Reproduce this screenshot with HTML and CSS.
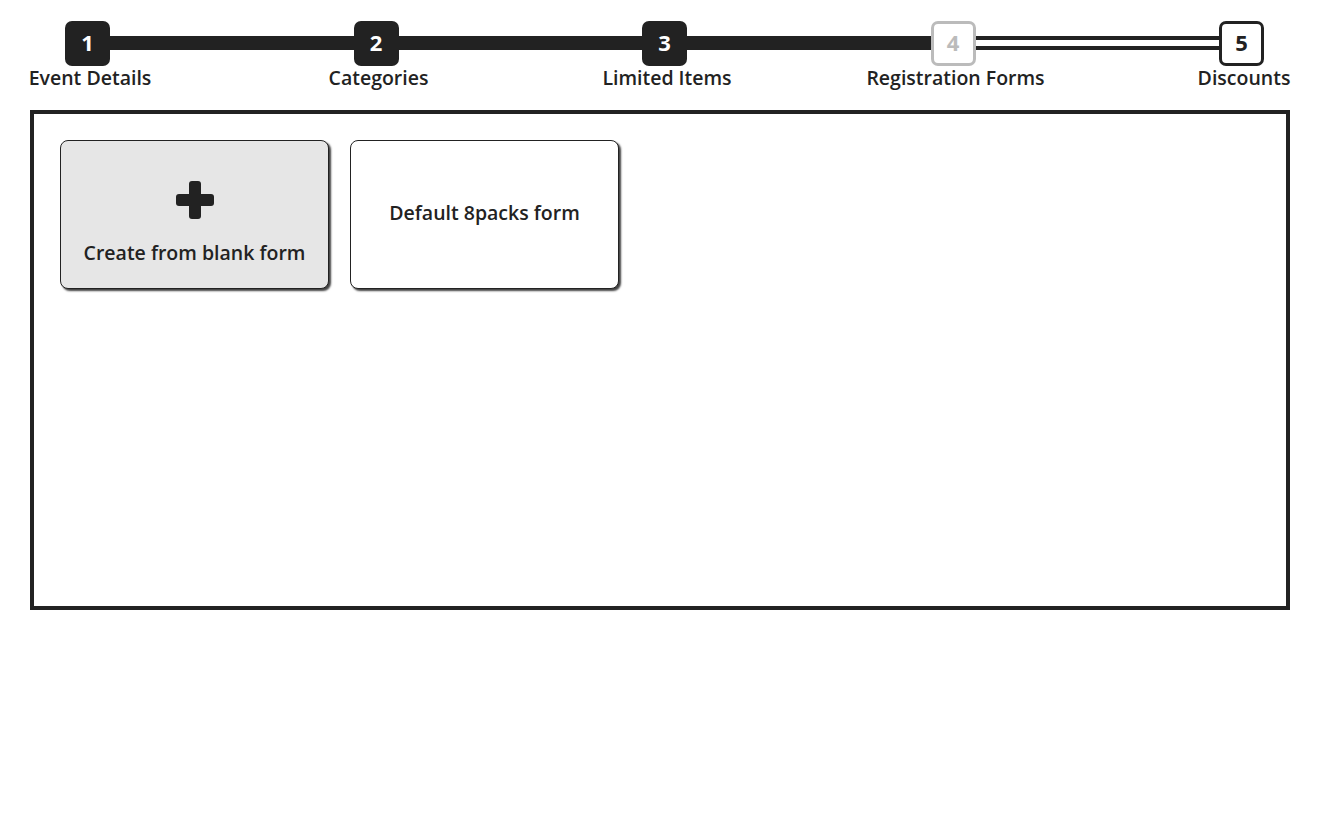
FILE: index.html
```html
<!DOCTYPE html>
<html lang="en">
<head>
  <meta charset="UTF-8" />
  <title>Registration Forms</title>
  <link rel="stylesheet" href="styles.css">
</head>
<body>
  <div class="steps">
    <div class="step done">
      <div class="step-num">1</div>
      <div class="step-label">Event Details</div>
    </div>
    <div class="bar"></div>
    <div class="step done">
      <div class="step-num">2</div>
      <div class="step-label">Categories</div>
    </div>
    <div class="bar"></div>
    <div class="step done">
      <div class="step-num">3</div>
      <div class="step-label">Limited Items</div>
    </div>
    <div class="bar"></div>
    <div class="step current">
      <div class="step-num">4</div>
      <div class="step-label">Registration Forms</div>
    </div>
    <div class="bar hollow"></div>
    <div class="step todo">
      <div class="step-num">5</div>
      <div class="step-label">Discounts</div>
    </div>
  </div>

  <div class="panel">
    <div class="form-card blank">
      <svg class="plus" width="38" height="38" viewBox="0 0 38 38">
        <rect x="13" y="0" width="12" height="38" rx="3" fill="#222"/>
        <rect x="0" y="13" width="38" height="12" rx="3" fill="#222"/>
      </svg>
      <span>Create from blank form</span>
    </div>
    <div class="form-card">
      <span>Default 8packs form</span>
    </div>
  </div>
</body>
</html>
```

FILE: styles.css
```css
* {
  box-sizing: border-box;
}
body {
  margin: 0;
  padding: 21px 30px;
  font-family: 'Open Sans', sans-serif;
  color: #222;
  background: #fff;
}
.steps {
  display: flex;
  align-items: flex-start;
  padding: 0 26px 0 35px;
  height: 89px;
}
.step {
  width: 45px;
  display: flex;
  flex-direction: column;
  align-items: center;
  position: relative;
  z-index: 1;
}
.step-num {
  width: 45px;
  height: 45px;
  border-radius: 7px;
  display: flex;
  align-items: center;
  justify-content: center;
  padding-bottom: 3px;
  font-size: 22px;
  font-weight: 700;
}
.step.done .step-num {
  background: #222;
  color: #fff;
}
.step.current .step-num {
  background: #fff;
  border: 3px solid #bbb;
  color: #bbb;
}
.step.todo .step-num {
  background: #fff;
  border: 3px solid #222;
  color: #222;
}
.step-label {
  margin-top: -2px;
  margin-left: 5px;
  font-size: 19.5px;
  font-weight: 600;
  white-space: nowrap;
}
.bar {
  flex: 1;
  height: 14px;
  margin-top: 15px;
  background: #222;
}
.bar.hollow {
  background: #fff;
  border-top: 4px solid #222;
  border-bottom: 4px solid #222;
}
.panel {
  border: 4px solid #222;
  height: 500px;
  padding: 26px;
  display: flex;
  align-items: flex-start;
  gap: 21px;
}
.form-card {
  width: 269px;
  height: 149px;
  border: 1px solid #222;
  border-radius: 8px;
  box-shadow: 2px 2px 2px rgba(0, 0, 0, 0.75);
  background: #fff;
  display: flex;
  flex-direction: column;
  align-items: center;
  justify-content: center;
  padding-bottom: 4px;
  font-size: 19.5px;
  font-weight: 600;
}
.form-card.blank {
  background: #e6e6e6;
  justify-content: flex-start;
  padding: 40px 0 0;
}
.form-card.blank .plus {
  margin-bottom: 20px;
}
```
